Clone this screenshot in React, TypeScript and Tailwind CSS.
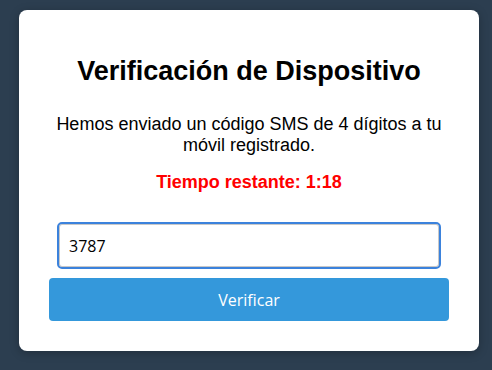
import React from "react";

export default function App() {
  return (
    <div className="w-[492px] h-[370px] bg-[#2c3e50] pt-[10px] pl-[19px]">
      <div className="w-[460px] h-[341px] bg-white rounded-[8px] shadow-[0_2px_10px_rgba(0,0,0,0.25)] px-[30px] pt-[30px] flex flex-col">
        <h2 className="mt-[16px] text-center font-bold text-[27px] leading-[31px] text-black font-['Liberation_Sans',Arial,sans-serif]">
          Verificación de Dispositivo
        </h2>
        <p className="mt-[27px] text-center text-[18px] leading-[21px] text-black font-['Liberation_Sans',Arial,sans-serif]">
          Hemos enviado un código SMS de 4 dígitos a tu móvil registrado.
        </p>
        <p className="mt-[16px] text-center font-bold text-[18px] leading-[21px] text-[#ff0000] font-['Liberation_Sans',Arial,sans-serif]">
          Tiempo restante: 1:18
        </p>
        <input
          type="text"
          defaultValue="3787"
          className="mt-[29px] mx-[8px] h-[47px] rounded-[5px] border-2 border-[#3b82dc] shadow-[inset_0_0_0_1px_#c8c8c8] px-[10px] text-[16px] text-black outline-none font-['Open_Sans',sans-serif]"
        />
        <button className="mt-[9px] h-[43px] w-full rounded-[4px] bg-[#3498db] text-white text-[16px] font-['Open_Sans',sans-serif]">
          Verificar
        </button>
      </div>
    </div>
  );
}
